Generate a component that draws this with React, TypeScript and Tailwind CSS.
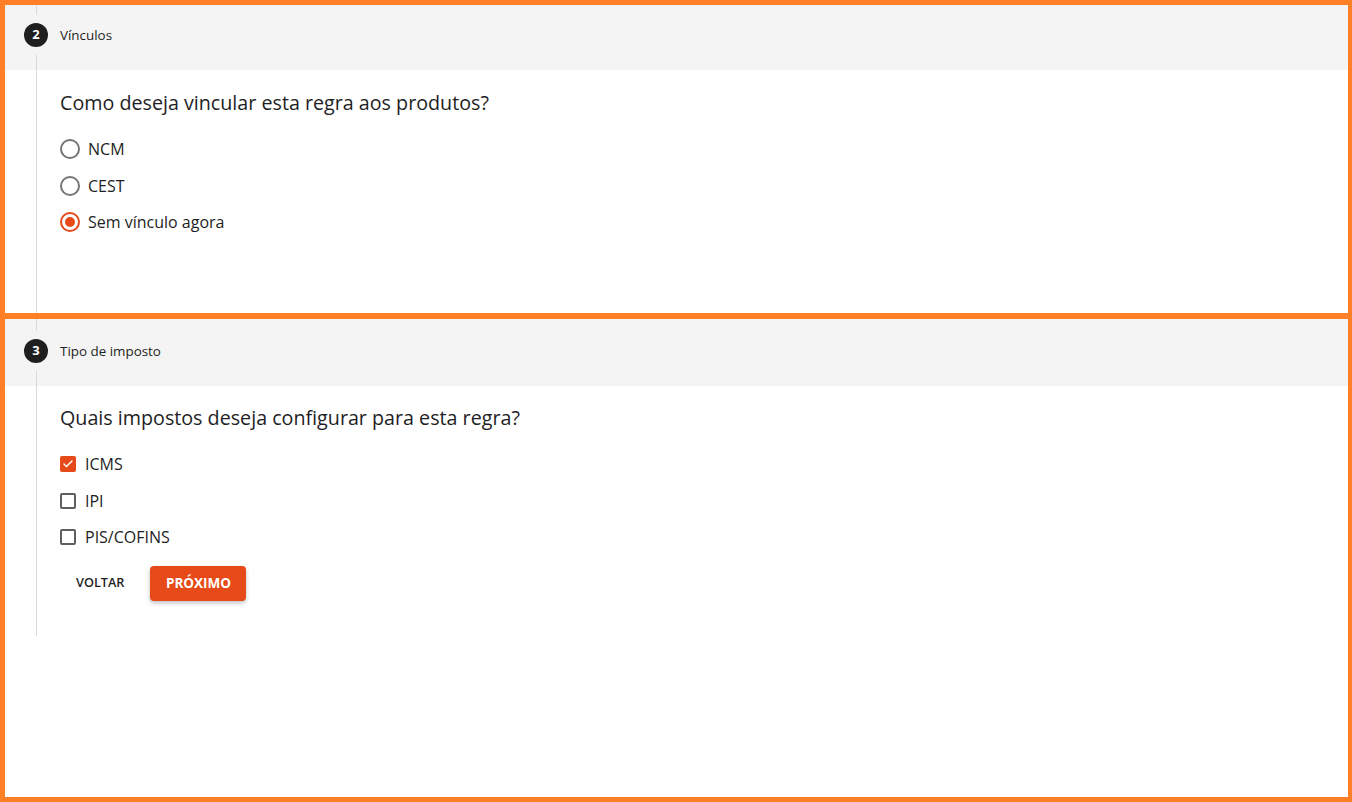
import { useState } from 'react';
import { Check } from 'lucide-react';

const font = { fontFamily: '"Open Sans", Lato, sans-serif' };

function StepHeader({ n, title }: { n: number; title: string }) {
  return (
    <div className="flex h-[70px] items-stretch bg-[#f4f4f4]">
      {/* connector + step number */}
      <div className="ml-[24px] flex w-6 flex-col items-center gap-2">
        <div className="w-px flex-1 bg-[#d9d9d9]" />
        <div className="flex h-6 w-6 items-center justify-center rounded-full bg-[#1f1f1f] text-[13px] font-bold text-white">
          {n}
        </div>
        <div className="w-px flex-1 bg-[#d9d9d9]" />
      </div>
      <div className="ml-3 flex items-center text-[13.4px] text-[#1e1e24]">{title}</div>
    </div>
  );
}

function Radio({ label, checked, onClick }: { label: string; checked: boolean; onClick: () => void }) {
  return (
    <button type="button" onClick={onClick} className="flex h-[36.5px] items-center gap-2 text-left">
      <span
        className={
          checked
            ? 'flex h-5 w-5 items-center justify-center rounded-full border-2 border-[#e64a19]'
            : 'flex h-5 w-5 items-center justify-center rounded-full border-2 border-[#757575]'
        }
      >
        {checked && <span className="h-2.5 w-2.5 rounded-full bg-[#e64a19]" />}
      </span>
      <span className="text-[16px] text-[#1e1e24]">{label}</span>
    </button>
  );
}

function CheckBox({ label, checked, onClick }: { label: string; checked: boolean; onClick: () => void }) {
  return (
    <button type="button" onClick={onClick} className="flex h-[36.5px] items-center gap-[9px] text-left">
      {checked ? (
        <span className="flex h-4 w-4 items-center justify-center rounded-[2px] bg-[#e64a19]">
          <Check size={12} strokeWidth={3} color="white" />
        </span>
      ) : (
        <span className="h-4 w-4 rounded-[2px] border-2 border-[#5f5f5f]" />
      )}
      <span className="text-[16px] text-[#1e1e24]">{label}</span>
    </button>
  );
}

export default function App() {
  const [vinculo, setVinculo] = useState('Sem vínculo agora');
  const [taxes, setTaxes] = useState<Record<string, boolean>>({ ICMS: true, IPI: false, 'PIS/COFINS': false });

  return (
    <div className="flex min-h-screen flex-col bg-white" style={font}>
      {/* Step 2 */}
      <section className="relative after:pointer-events-none after:absolute after:inset-0 after:border-t-[5px] after:border-r-4 after:border-b-[3px] after:border-l-[5px] after:border-[#ff7f27] after:content-['']">
        <StepHeader n={2} title="Vínculos" />
        <div className="flex h-[246px]">
          <div className="w-[60px] shrink-0 pl-[36px]">
            <div className="h-full w-px bg-[#d9d9d9]" />
          </div>
          <div className="pt-[19px]">
            <h2 className="text-[19.7px] leading-7 text-[#1e1e24]">Como deseja vincular esta regra aos produtos?</h2>
            <div className="mt-[14px] flex flex-col">
              {['NCM', 'CEST', 'Sem vínculo agora'].map((opt) => (
                <Radio key={opt} label={opt} checked={vinculo === opt} onClick={() => setVinculo(opt)} />
              ))}
            </div>
          </div>
        </div>
      </section>

      {/* Step 3 */}
      <section className="relative flex flex-1 flex-col after:pointer-events-none after:absolute after:inset-0 after:border-t-[3px] after:border-r-4 after:border-b-[5px] after:border-l-[5px] after:border-[#ff7f27] after:content-['']">
        <StepHeader n={3} title="Tipo de imposto" />
        <div className="flex">
          <div className="w-[60px] shrink-0 pl-[36px]">
            <div className="h-full w-px bg-[#d9d9d9]" />
          </div>
          <div className="pt-[18px] pb-[35px]">
            <h2 className="text-[19.7px] leading-7 text-[#1e1e24]">Quais impostos deseja configurar para esta regra?</h2>
            <div className="mt-[14px] flex flex-col">
              {Object.keys(taxes).map((t) => (
                <CheckBox
                  key={t}
                  label={t}
                  checked={taxes[t]}
                  onClick={() => setTaxes({ ...taxes, [t]: !taxes[t] })}
                />
              ))}
            </div>
            <div className="mt-[10px] flex items-center gap-[10px]">
              <button type="button" className="h-[35px] rounded px-4 text-[12.7px] font-semibold text-[#1e1e24]">
                VOLTAR
              </button>
              <button
                type="button"
                className="h-[35px] w-24 rounded bg-[#e64a19] text-[13.5px] font-bold text-white shadow-[0_2px_4px_rgba(0,0,0,0.25)]"
              >
                PRÓXIMO
              </button>
            </div>
          </div>
        </div>
      </section>
    </div>
  );
}
